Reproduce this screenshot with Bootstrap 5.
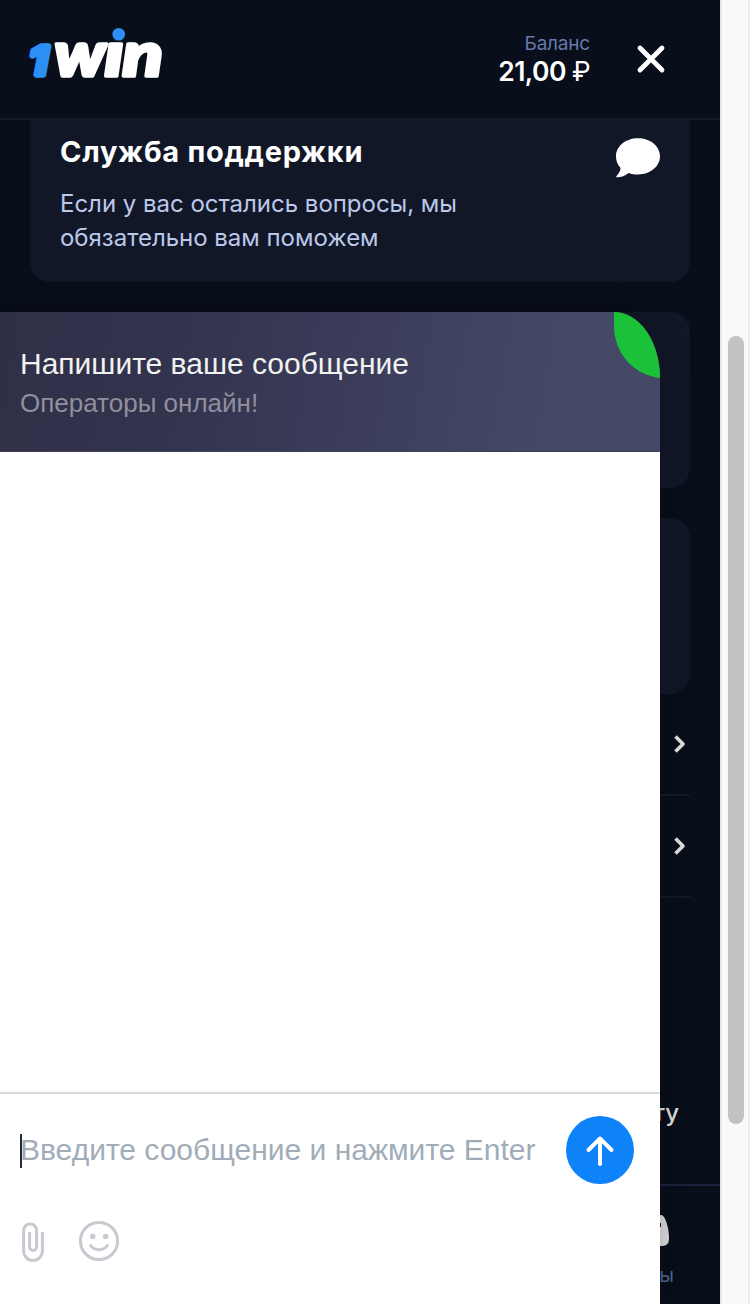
<!DOCTYPE html>
<html lang="ru">
<head>
<meta charset="utf-8">
<meta name="viewport" content="width=device-width, initial-scale=1">
<title>1win</title>
<link rel="stylesheet" href="https://cdn.jsdelivr.net/npm/bootstrap@5.3.0/dist/css/bootstrap.min.css">
<style>
html,body{height:1304px;overflow:hidden}
body{background:#fafafa;font-family:Inter,"Open Sans",sans-serif}
.app{width:720px;height:1304px;background:#080e1a}
.gutter{width:30px;border-left:2px solid #e9e7e6;border-right:2px solid #ededed;background:#fafafa;padding:336px 4px 0 6px}
.thumb{height:788px;background:#c2c2c2;border-radius:8px}
.topbar{height:120px;border-bottom:2px solid #14192b;padding:0 54px 0 10px}
.logo text{font-family:Lato,sans-serif;font-weight:900;font-style:italic}
.logo .digit{font-family:Inter,sans-serif;font-weight:700}
.bal-label{font-size:19px;line-height:22px;color:#667bab;letter-spacing:-.2px}
.bal-sum{font-size:26.500px;line-height:32px;font-weight:600;color:#fff;white-space:nowrap;letter-spacing:-.55px}
.panel{background:#121728;border-radius:20px}
.support{height:162px;border-radius:0 0 20px 20px;padding:14px 30px 0}
.support h1{font-size:29px;line-height:36px;font-weight:700;color:#fff;margin:0;letter-spacing:.72px}
.support p{font-size:24px;line-height:34px;color:#bcc8ea;margin:17px 0 0;white-space:nowrap;letter-spacing:-.02px}
.blank{height:176px;background:#121728}
.line-row{height:102px;border-bottom:2px solid #14192b;padding-right:3px}
.agree{height:286px;padding:197px 41px 0 0;font-size:24px;line-height:36px;font-weight:500;color:#dcdedd;text-align:right}
.bottomnav{border-top:2px solid #1d213b;height:120px;padding:28px 46px 0 0}
.bottomnav span{font-size:20px;line-height:26px;margin-top:15px;color:#52638a}
.chat{width:660px;height:992px;left:0;top:312px;font-family:"Liberation Sans",Arial,sans-serif}
.chat-shadow{box-shadow:0 0 30px rgba(0,0,0,.22);border-radius:0 46px 0 0/0 66px 0 0}
.chat-head{height:140px;padding:33px 20px;background:linear-gradient(100deg,#302f48 0%,#32334d 26%,#3b3d5b 55%,#444867 82%,#454968 100%);border-bottom:1px solid #403f5a;border-radius:0 46px 0 0/0 66px 0 0}
.chat-title{font-size:30px;line-height:38px;color:#f2f2f0}
.chat-sub{font-size:26px;line-height:40px;color:#918f9d}
.leaf{top:0;right:0}
.compose{height:212px;border-top:2px solid #d6dbe2;padding:22px 26px 0 20px}
.compose input{border:0;outline:0;padding:0;font-size:30px;line-height:40px;width:530px;height:68px;background:transparent}
.compose input::placeholder{color:#a0adb9;opacity:1}
.caret{width:2px;height:34px;left:0;top:18px;background:#1f2c39}
.send{width:68px;height:68px;background:#0d82f9}
.tools{margin-top:36px;gap:32px}
</style>
</head>
<body>
<div class="d-flex position-relative">
  <div class="app d-flex flex-column overflow-hidden">
    <header class="topbar d-flex flex-shrink-0">
      <svg class="logo flex-shrink-0" width="170" height="112" viewBox="10 0 170 112" aria-label="1win">
        <text class="digit" x="29" y="75" font-size="39" fill="#2b8ff6" stroke="#2b8ff6" stroke-width="5.500" stroke-linejoin="round" textLength="19" lengthAdjust="spacingAndGlyphs">1</text>
        <g fill="#fff" stroke="#fff" stroke-width="3.400" stroke-linejoin="round" font-size="60">
          <text x="54.500" y="76.200" textLength="51" lengthAdjust="spacingAndGlyphs">w</text>
          <text x="104.500" y="76.200" textLength="19" lengthAdjust="spacingAndGlyphs">ı</text>
          <text x="122.500" y="76.200" textLength="40.500" lengthAdjust="spacingAndGlyphs">n</text>
        </g>
        <circle cx="118.700" cy="34.300" r="6.300" fill="#2b8ff6"/>
      </svg>
      <div class="ms-auto text-end" style="padding-top:33px">
        <div class="bal-label">Баланс</div>
        <div class="bal-sum">21,00 <span class="fw-normal">₽</span></div>
      </div>
      <svg class="flex-shrink-0" style="margin:44px 0 0 46px" width="30" height="30" viewBox="636 44 30 30" fill="none" stroke="#fff" stroke-width="4.800" stroke-linecap="round"><path d="M640 48l22 22M662 48l-22 22"/></svg>
    </header>
    <main class="flex-shrink-0">
      <section class="panel support d-flex justify-content-between mx-auto" style="width:660px">
        <div><h1>Служба поддержки</h1><p>Если у вас остались вопросы, мы<br>обязательно вам поможем</p></div>
        <svg width="44" height="40" viewBox="616 138 44 40" style="margin-top:4px" fill="#fff"><path d="M638 138.300c12.500 0 22 8 22 18s-9.500 18.200-22 18.200c-3.500 0-6.500-.5-9.300-1.500-3.500 3-8 4.500-12.500 4.300-.5-.8 5-5.500 4.200-9.500-3-3.200-4.400-7-4.400-11.500 0-10 9.500-18 22-18z"/></svg>
      </section>
      <section class="panel blank mx-auto" style="width:660px;margin-top:30px"></section>
      <section class="panel blank mx-auto" style="width:660px;margin-top:30px"></section>
      <div class="mx-auto" style="width:660px">
        <div class="line-row d-flex align-items-center justify-content-end"><svg width="14" height="20" viewBox="0 0 14 20" fill="none" stroke="#dcdedd" stroke-width="3.600"><path d="M2.500 2.500L10 10l-7.500 7.500" stroke-linejoin="round"/></svg></div>
        <div class="line-row d-flex align-items-center justify-content-end"><svg width="14" height="20" viewBox="0 0 14 20" fill="none" stroke="#dcdedd" stroke-width="3.600"><path d="M2.500 2.500L10 10l-7.500 7.500" stroke-linejoin="round"/></svg></div>
      </div>
      <div class="agree">ту</div>
    </main>
    <nav class="bottomnav d-flex flex-column align-items-end flex-shrink-0">
      <svg class="flex-shrink-0" width="24" height="33" viewBox="650 1214 24 33"><path d="M652 1215h9c4.500 0 8 14 8 23 0 6-2 7.500-7 8h-10z" fill="#d8d9d8"/><path d="M660 1223v4" stroke="#22252b" stroke-width="2"/></svg>
      <span>ы</span>
    </nav>
  </div>
  <div class="gutter"><div class="thumb"></div></div>

  <section class="chat chat-shadow position-absolute d-flex flex-column">
    <div class="chat-head position-relative">
      <div class="chat-title">Напишите ваше сообщение</div>
      <div class="chat-sub">Операторы онлайн!</div>
      <svg class="leaf position-absolute" width="46" height="66" viewBox="0 0 46 66"><path d="M0 0A46 66 0 0 1 46 66C21 63 0 43 0 13z" fill="#1bc138"/></svg>
    </div>
    <div class="bg-white flex-grow-1"></div>
    <div class="compose bg-white">
      <div class="d-flex justify-content-between position-relative">
        <input type="text" placeholder="Введите сообщение и нажмите Enter">
        <span class="caret position-absolute"></span>
        <div class="send rounded-circle d-flex align-items-center justify-content-center"><svg width="32" height="32" viewBox="584 1134 32 32" fill="none" stroke="#fff" stroke-width="4" stroke-linecap="round" stroke-linejoin="round"><path d="M600 1164v-25M588.500 1150L600 1138.500l11.500 11.500"/></svg></div>
      </div>
      <div class="tools d-flex" style="color:#c8cad2">
        <svg width="26" height="42" viewBox="20 1220 26 42" fill="none" stroke="currentColor" stroke-width="3"><path d="M42.400 1232v19a9.400 9.400 0 0 1-18.800 0v-20.500a6.500 6.500 0 0 1 13 0V1247a3.500 3.500 0 0 1-7 0v-15"/></svg>
        <svg width="42" height="42" viewBox="78 1220 42 42" fill="none" stroke="currentColor" stroke-width="3"><circle cx="99" cy="1241" r="18.600"/><path d="M90.600 1245.500c3.500 5.500 13.300 5.500 16.800 0" stroke-linecap="round"/><g fill="currentColor" stroke="none"><circle cx="92.700" cy="1236.500" r="2.800"/><circle cx="105.700" cy="1236.500" r="2.800"/></g></svg>
      </div>
    </div>
  </section>
</div>
<script src="https://cdn.jsdelivr.net/npm/bootstrap@5.3.0/dist/js/bootstrap.bundle.min.js"></script>
</body>
</html>
